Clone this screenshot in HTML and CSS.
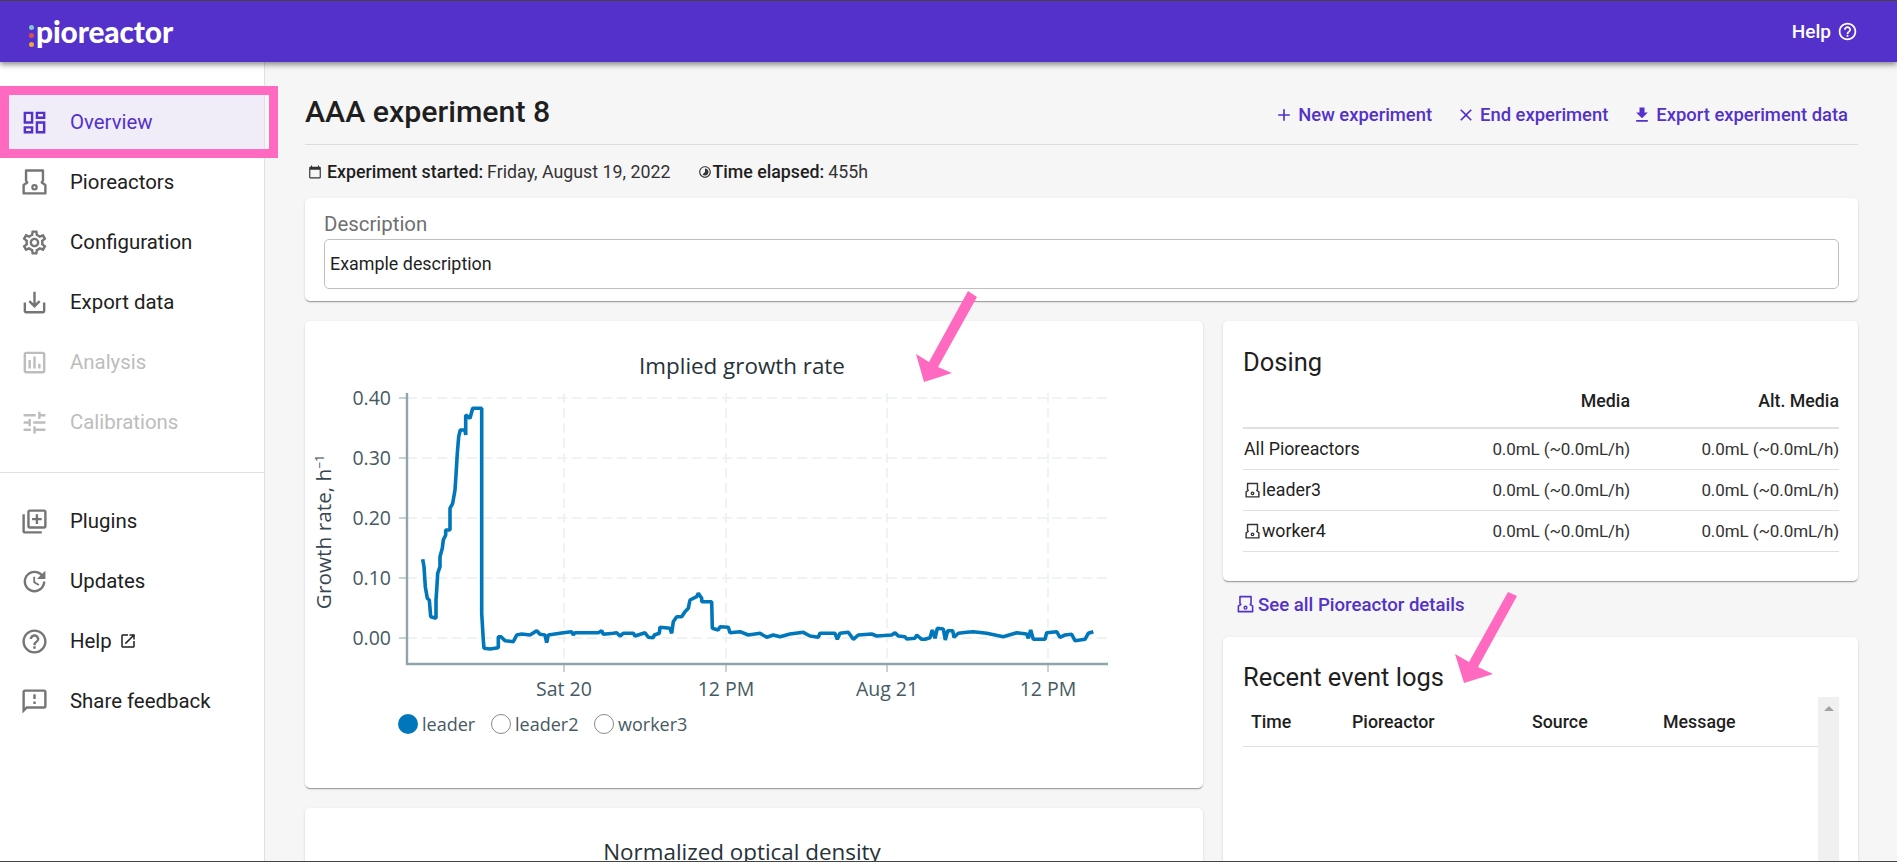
FILE: index.html
```html
<!DOCTYPE html>
<html lang="en">
<head>
<meta charset="utf-8">
<title>Pioreactor - Overview</title>
<link rel="stylesheet" href="styles.css">
</head>
<body>
<svg class="defs" width="0" height="0" aria-hidden="true">
  <symbol id="pio" viewBox="0 0 24 24">
    <path d="M5 2h14v8.5L18 12l3 2v7H3v-7l3-2-1-1.5z" fill="none" stroke="currentColor" stroke-width="2" stroke-linejoin="round"/>
    <circle cx="12" cy="16" r="1.8" fill="none" stroke="currentColor" stroke-width="1.8"/>
  </symbol>
</svg>
<div class="frame">
  <header class="topbar">
    <a class="logo"><span class="logo-dots"><i class="dot dot-a"></i><i class="dot dot-b"></i><i class="dot dot-c"></i></span><span class="logo-text">pioreactor</span></a>
    <a class="top-help">Help
      <svg class="ic-help" viewBox="0 0 24 24"><path d="M11 18h2v-2h-2v2zm1-16C6.48 2 2 6.48 2 12s4.48 10 10 10 10-4.48 10-10S17.52 2 12 2zm0 18c-4.41 0-8-3.59-8-8s3.59-8 8-8 8 3.59 8 8-3.59 8-8 8zm0-14c-2.21 0-4 1.79-4 4h2c0-1.1.9-2 2-2s2 .9 2 2c0 2-3 1.75-3 5h2c0-2.25 3-2.5 3-5 0-2.21-1.79-4-4-4z"/></svg>
    </a>
  </header>
  <div class="shell">
    <nav class="sidebar">
      <ul class="nav-list nav-top">
        <li class="nav-item active"><svg class="nav-ic" viewBox="0 0 24 24"><path d="M19 5v2h-4V5h4M9 5v6H5V5h4m10 8v6h-4v-6h4M9 17v2H5v-2h4M21 3h-8v6h8V3zM11 3H3v10h8V3zm10 8h-8v10h8V11zm-10 4H3v6h8v-6z"/></svg>Overview</li>
        <li class="nav-item"><svg class="nav-ic"><use href="#pio"/></svg>Pioreactors</li>
        <li class="nav-item"><svg class="nav-ic" viewBox="0 0 24 24"><path d="M19.43 12.98c.04-.32.07-.64.07-.98 0-.34-.03-.66-.07-.98l2.11-1.65c.19-.15.24-.42.12-.64l-2-3.46c-.09-.16-.26-.25-.44-.25-.06 0-.12.01-.17.03l-2.49 1c-.52-.4-1.08-.73-1.69-.98l-.38-2.65C14.46 2.18 14.25 2 14 2h-4c-.25 0-.46.18-.49.42l-.38 2.65c-.61.25-1.17.59-1.69.98l-2.49-1c-.06-.02-.12-.03-.18-.03-.17 0-.34.09-.43.25l-2 3.46c-.13.22-.07.49.12.64l2.11 1.65c-.04.32-.07.65-.07.98 0 .33.03.66.07.98l-2.11 1.65c-.19.15-.24.42-.12.64l2 3.46c.09.16.26.25.44.25.06 0 .12-.01.17-.03l2.49-1c.52.4 1.08.73 1.69.98l.38 2.65c.03.24.24.42.49.42h4c.25 0 .46-.18.49-.42l.38-2.65c.61-.25 1.17-.59 1.69-.98l2.49 1c.06.02.12.03.18.03.17 0 .34-.09.43-.25l2-3.46c.12-.22.07-.49-.12-.64l-2.11-1.65zm-1.98-1.71c.04.31.05.52.05.73 0 .21-.02.43-.05.73l-.14 1.13.89.7 1.08.84-.7 1.21-1.27-.51-1.04-.42-.9.68c-.43.32-.84.56-1.25.73l-1.06.43-.16 1.13-.2 1.35h-1.4l-.19-1.35-.16-1.13-1.06-.43c-.43-.18-.83-.41-1.23-.71l-.91-.7-1.06.43-1.27.51-.7-1.21 1.08-.84.89-.7-.14-1.13c-.03-.31-.05-.54-.05-.74s.02-.43.05-.73l.14-1.13-.89-.7-1.08-.84.7-1.21 1.27.51 1.04.42.9-.68c.43-.32.84-.56 1.25-.73l1.06-.43.16-1.13.2-1.35h1.39l.19 1.35.16 1.13 1.06.43c.43.18.83.41 1.23.71l.91.7 1.06-.43 1.27-.51.7 1.21-1.07.85-.89.7.14 1.13zM12 8c-2.21 0-4 1.79-4 4s1.79 4 4 4 4-1.79 4-4-1.79-4-4-4zm0 6c-1.1 0-2-.9-2-2s.9-2 2-2 2 .9 2 2-.9 2-2 2z"/></svg>Configuration</li>
        <li class="nav-item"><svg class="nav-ic" viewBox="0 0 24 24"><path d="M19 12v7H5v-7H3v7c0 1.1.9 2 2 2h14c1.1 0 2-.9 2-2v-7h-2zm-6 .67l2.59-2.58L17 11.5l-5 5-5-5 1.41-1.41L11 12.67V3h2z"/></svg>Export data</li>
        <li class="nav-item disabled"><svg class="nav-ic" viewBox="0 0 24 24"><path d="M9 17H7v-7h2v7zm4 0h-2V7h2v10zm4 0h-2v-4h2v4zm2 2H5V5h14v14zm0-16H5c-1.1 0-2 .9-2 2v14c0 1.1.9 2 2 2h14c1.1 0 2-.9 2-2V5c0-1.1-.9-2-2-2z"/></svg>Analysis</li>
        <li class="nav-item disabled"><svg class="nav-ic" viewBox="0 0 24 24"><path d="M3 17v2h6v-2H3zM3 5v2h10V5H3zm10 16v-2h8v-2h-8v-2h-2v6h2zM7 9v2H3v2h4v2h2V9H7zm14 4v-2H11v2h10zm-6-4h2V7h4V5h-4V3h-2v6z"/></svg>Calibrations</li>
      </ul>
      <ul class="nav-list nav-bottom">
        <li class="nav-item"><svg class="nav-ic" viewBox="0 0 24 24"><path d="M4 6H2v14c0 1.1.9 2 2 2h14v-2H4V6zm16-4H8c-1.1 0-2 .9-2 2v12c0 1.1.9 2 2 2h12c1.1 0 2-.9 2-2V4c0-1.1-.9-2-2-2zm0 14H8V4h12v12zm-7-2h2v-3h3V9h-3V6h-2v3h-3v2h3z"/></svg>Plugins</li>
        <li class="nav-item"><svg class="nav-ic" viewBox="0 0 24 24"><path d="M11 8v5l4.25 2.52.77-1.28-3.52-2.09V8H11zm10 2V3l-2.64 2.64C16.74 4.01 14.49 3 12 3c-4.97 0-9 4.03-9 9s4.03 9 9 9 9-4.03 9-9h-2c0 3.86-3.14 7-7 7s-7-3.14-7-7 3.14-7 7-7c1.93 0 3.68.79 4.95 2.05L14 10h7z"/></svg>Updates</li>
        <li class="nav-item"><svg class="nav-ic" viewBox="0 0 24 24"><path d="M11 18h2v-2h-2v2zm1-16C6.48 2 2 6.48 2 12s4.48 10 10 10 10-4.48 10-10S17.52 2 12 2zm0 18c-4.41 0-8-3.59-8-8s3.59-8 8-8 8 3.59 8 8-3.59 8-8 8zm0-14c-2.21 0-4 1.79-4 4h2c0-1.1.9-2 2-2s2 .9 2 2c0 2-3 1.75-3 5h2c0-2.25 3-2.5 3-5 0-2.21-1.79-4-4-4z"/></svg>Help<svg class="ext-ic" viewBox="0 0 24 24"><path d="M19 19H5V5h7V3H5c-1.11 0-2 .9-2 2v14c0 1.1.89 2 2 2h14c1.1 0 2-.9 2-2v-7h-2v7zM14 3v2h3.59l-9.83 9.83 1.41 1.41L19 6.41V10h2V3h-7z"/></svg></li>
        <li class="nav-item"><svg class="nav-ic" viewBox="0 0 24 24"><path d="M20 2H4c-1.1 0-1.99.9-1.99 2L2 22l4-4h14c1.1 0 2-.9 2-2V4c0-1.1-.9-2-2-2zm0 14H5.17L4 17.17V4h16v12zm-9-4h2v2h-2zm0-6h2v4h-2z"/></svg>Share feedback</li>
      </ul>
    </nav>
    <main class="content">
      <div class="page-head">
        <h1 class="page-title">AAA experiment 8</h1>
        <div class="actions">
          <a class="action"><svg class="action-ic" viewBox="0 0 24 24"><path d="M19 13h-6v6h-2v-6H5v-2h6V5h2v6h6v2z"/></svg>New experiment</a>
          <a class="action"><svg class="action-ic" viewBox="0 0 24 24"><path d="M19 6.41L17.59 5 12 10.59 6.41 5 5 6.41 10.59 12 5 17.59 6.41 19 12 13.41 17.59 19 19 17.59 13.41 12 19 6.41z"/></svg>End experiment</a>
          <a class="action"><svg class="action-ic" viewBox="0 0 24 24"><path d="M19 9h-4V3H9v6H5l7 7 7-7zM5 18v2h14v-2H5z"/></svg>Export experiment data</a>
        </div>
      </div>
      <div class="meta">
        <span class="meta-item"><svg class="meta-ic" viewBox="0 0 24 24"><path d="M20 3h-1V1h-2v2H7V1H5v2H4c-1.1 0-2 .9-2 2v16c0 1.1.9 2 2 2h16c1.1 0 2-.9 2-2V5c0-1.1-.9-2-2-2zm0 18H4V8h16v13z"/></svg><b>Experiment started:</b><span class="meta-val">Friday, August 19, 2022</span></span>
        <span class="meta-item meta-time"><svg class="meta-ic" viewBox="0 0 24 24"><path d="M16.24 7.76C15.07 6.59 13.54 6 12 6v6l-4.24 4.24c2.34 2.34 6.14 2.34 8.49 0 2.34-2.34 2.34-6.14-.01-8.48zM12 2C6.48 2 2 6.48 2 12s4.48 10 10 10 10-4.48 10-10S17.52 2 12 2zm0 18c-4.42 0-8-3.58-8-8s3.58-8 8-8 8 3.58 8 8-3.58 8-8 8z"/></svg><b>Time elapsed:</b><span class="meta-val">455h</span></span>
      </div>
      <section class="card desc-card">
        <div class="desc-label">Description</div>
        <div class="desc-input">Example description</div>
      </section>
      <div class="columns">
        <div class="col">
          <section class="card chart-card">
            <svg class="chart" viewBox="305 321 898 467">
              <text class="chart-title" x="742" y="374" text-anchor="middle">Implied growth rate</text>
              <g class="grid">
                <line x1="407" x2="1108" y1="398" y2="398"/><line x1="407" x2="1108" y1="458" y2="458"/><line x1="407" x2="1108" y1="518" y2="518"/><line x1="407" x2="1108" y1="578" y2="578"/><line x1="407" x2="1108" y1="638" y2="638"/>
                <line x1="564" x2="564" y1="393" y2="664"/><line x1="726" x2="726" y1="393" y2="664"/><line x1="887" x2="887" y1="393" y2="664"/><line x1="1048" x2="1048" y1="393" y2="664"/>
              </g>
              <g class="ticks">
                <line x1="399" x2="407" y1="398" y2="398"/><line x1="399" x2="407" y1="458" y2="458"/><line x1="399" x2="407" y1="518" y2="518"/><line x1="399" x2="407" y1="578" y2="578"/><line x1="399" x2="407" y1="638" y2="638"/>
                <line x1="564" x2="564" y1="664" y2="672"/><line x1="726" x2="726" y1="664" y2="672"/><line x1="887" x2="887" y1="664" y2="672"/><line x1="1048" x2="1048" y1="664" y2="672"/>
              </g>
              <path class="axis" d="M407 393V664H1108"/>
              <g class="tick-labels" text-anchor="end">
                <text x="391" y="405">0.40</text><text x="391" y="465">0.30</text><text x="391" y="525">0.20</text><text x="391" y="585">0.10</text><text x="391" y="645">0.00</text>
              </g>
              <g class="tick-labels" text-anchor="middle">
                <text x="564" y="696">Sat 20</text><text x="726" y="696">12 PM</text><text x="887" y="696">Aug 21</text><text x="1048" y="696">12 PM</text>
              </g>
              <text class="y-title" transform="translate(331 532) rotate(-90)" text-anchor="middle">Growth rate, h<tspan class="sup" dy="-7">−1</tspan></text>
              <polyline class="series" points="422.7,559.3 424,566.7 425.3,586.7 427.3,598.3 429.3,600 430.7,616.7 436,618.3 436,600 436.7,590 437.7,573.3 440,566.7 440,556.7 442.3,548.3 443.3,540 445.7,535 445.7,530 450,530 450,508.3 452.7,503.3 455,490 456,475 457.3,453.3 458.7,436.7 460.3,430 465,430 465.7,435 465.7,415 470,418.3 472.7,408.3 481.7,408.3 481.7,600 481.7,613.3 483.3,640 484,648.3 490,649 498.3,647.7 498.3,636.7 501,636.7 505,640.7 513.3,641.7 516.7,635 521.7,634 530,635 536.7,630.7 540,634.3 545,635 546.7,642.7 548.3,635 563.3,632.7 571.7,631.7 573.3,635 575,632.7 598.3,632.7 601.7,630.7 603.3,634.3 613.3,633.3 616.7,632.7 620,636 623.3,633.3 633.3,633.3 635,636 645,632.7 648.3,637.3 653.3,637.7 654.3,635 659.3,633.3 660,627.3 670,628.3 671.7,633.3 673.3,621.7 676.7,616.7 681.7,616.7 685,611.7 688.3,608.3 690,600 696.7,596.7 698.3,593.3 701.7,598.3 701.7,601.7 711.7,601.7 712.3,628.3 718.3,630 720,626.7 728.3,627.3 730,632.7 740,631.7 748.3,635 760,633.3 766.7,637.3 773.3,635 780,636.7 790,634 803.3,632.3 810,636 818.3,637.3 820,633.3 835,633.3 837.3,639.3 840,633.3 848.3,632.3 853.3,639.3 858.3,635 871.7,634 876.7,636 891.7,635 895,632.7 898.3,636 905,636.7 906.7,639 915,638.3 916.7,635 921.7,639.3 925,639.3 930,637.7 932.3,630 935,638.3 937.3,628.3 943.3,629 945.3,640 947.7,630.7 952.7,630.7 954,637.3 958.3,633.3 966.7,632.3 973.3,631.7 986.7,633.3 1003.3,636.7 1016.7,632.7 1026.7,634 1028.3,638.3 1030.7,630 1033.3,639.3 1045,639.3 1046.7,632.7 1056.7,631.7 1060,637.3 1065,635 1071.7,634.3 1075,640.7 1085,639.3 1088.3,633.3 1093.3,631.7"/>
              <circle class="leg-on" cx="408" cy="724" r="10"/><text class="legend" x="422" y="731">leader</text>
              <circle class="leg-off" cx="501" cy="724" r="9.5"/><text class="legend" x="515" y="731">leader2</text>
              <circle class="leg-off" cx="604" cy="724" r="9.5"/><text class="legend" x="618" y="731">worker3</text>
            </svg>
          </section>
          <section class="card chart-card next-card">
            <div class="next-title">Normalized optical density</div>
          </section>
        </div>
        <div class="col">
          <section class="card dosing">
            <h2 class="card-title">Dosing</h2>
            <table class="dose-table">
              <thead><tr><th class="c-name"></th><th class="c-num">Media</th><th class="c-alt">Alt. Media</th></tr></thead>
              <tbody>
                <tr><td>All Pioreactors</td><td class="num">0.0mL (~0.0mL/h)</td><td class="num">0.0mL (~0.0mL/h)</td></tr>
                <tr><td><svg class="unit-ic"><use href="#pio"/></svg>leader3</td><td class="num">0.0mL (~0.0mL/h)</td><td class="num">0.0mL (~0.0mL/h)</td></tr>
                <tr><td><svg class="unit-ic"><use href="#pio"/></svg>worker4</td><td class="num">0.0mL (~0.0mL/h)</td><td class="num">0.0mL (~0.0mL/h)</td></tr>
              </tbody>
            </table>
          </section>
          <a class="details-link"><svg class="unit-ic link-ic"><use href="#pio"/></svg>See all Pioreactor details</a>
          <section class="card logs">
            <h2 class="card-title">Recent event logs</h2>
            <div class="log-wrap">
              <div class="log-table">
                <div class="log-head"><span>Time</span><span>Pioreactor</span><span>Source</span><span>Message</span></div>
              </div>
              <div class="scroll-track"><i class="scroll-up"></i></div>
            </div>
          </section>
        </div>
      </div>
    </main>
  </div>
</div>
<div class="mark-box"></div>
<svg class="mark-arrows" viewBox="0 0 1897 862">
  <polygon points="968,291 977,297 938,367 952,373 924,382 916,354 929,362"/>
  <polygon points="1508,592 1517,596 1478,667 1493,674 1464,683 1455,654 1469,662"/>
</svg>
</body>
</html>
```
FILE: styles.css
```css
* { box-sizing: border-box; }
html, body { margin: 0; height: 100%; overflow: hidden; }
body { font-family: Roboto, "Noto Sans", sans-serif; color: #1f1f1f; background: #f6f6f6; position: relative; }
.defs { position: absolute; }
.frame { height: 862px; border-top: 1px solid #444; border-bottom: 1px solid #444; display: flex; flex-direction: column; overflow: hidden; }

.topbar { height: 61px; flex: none; background: #5331ca; color: #fff; display: flex; align-items: center; justify-content: space-between; padding: 0 39px 0 29px; box-shadow: 0 2px 5px rgba(0,0,0,.35), 0 4px 6px rgba(0,0,0,.14); position: relative; z-index: 2; }
.logo { display: flex; align-items: center; gap: 2px; }
.logo-dots { display: flex; flex-direction: column; gap: 3.5px; margin-top: 8px; }
.dot { display: block; width: 5px; height: 5px; border-radius: 50%; }
.dot-a { background: #7fc8c9; }
.dot-b { background: #d9534f; }
.dot-c { background: #f0a63a; }
.logo-text { font-family: Lato, sans-serif; font-weight: 900; font-size: 29.8px; line-height: 36px; letter-spacing: -.1px; }
.top-help { display: flex; align-items: center; gap: 6px; font-size: 19px; font-weight: 500; }
.ic-help { width: 21px; height: 21px; fill: #fff; }

.shell { flex: 1; display: flex; min-height: 0; }
.sidebar { width: 265px; flex: none; background: #fff; border-right: 1px solid #e0e0e0; }
.nav-list { list-style: none; margin: 0; padding-left: 0; }
.nav-top { padding: 30px 0 20px; border-bottom: 1px solid #e0e0e0; }
.nav-bottom { padding: 18px 0 0; }
.nav-item { height: 60px; display: flex; align-items: center; padding-left: 20px; font-size: 20.4px; color: #212121; }
.nav-ic { width: 29px; height: 29px; margin-right: 21px; flex: none; fill: #757575; color: #757575; }
.ext-ic { width: 18px; height: 18px; margin-left: 7px; fill: #212121; }
.nav-item.active { background: #f0edf9; color: #5331ca; }
.nav-item.active .nav-ic { fill: #5331ca; }
.nav-item.disabled { color: #bdbdbd; }
.nav-item.disabled .nav-ic { fill: #bdbdbd; }

.content { flex: 1; min-width: 0; padding: 0 39px 0 40px; }
.page-head { display: flex; justify-content: space-between; align-items: center; padding: 30px 0 12px; border-bottom: 1px solid #dcdcdc; }
.page-title { margin: 0; font-size: 30.3px; line-height: 40px; font-weight: 500; color: #1f1f1f; }
.actions { display: flex; gap: 24px; margin-top: 5px; padding-right: 10px; }
.action { display: flex; align-items: center; gap: 4px; font-size: 18.4px; font-weight: 500; color: #5331ca; }
.action-ic { width: 20px; height: 20px; fill: #5331ca; }
.meta { height: 53px; display: flex; align-items: center; font-size: 17.8px; padding-left: 3px; }
.meta-item { display: flex; align-items: center; color: #333; }
.meta-item b { font-weight: 500; color: #1f1f1f; }
.meta-val { margin-left: 4px; }
.meta-time { margin-left: 28px; }
.meta-ic { width: 14px; height: 14px; fill: #333; flex: none; margin-right: 5px; }
.meta-time .meta-ic { margin-right: 0; }

.card { background: #fff; border-radius: 5px; box-shadow: 0 2px 1px -1px rgba(0,0,0,.2), 0 1px 1px rgba(0,0,0,.14), 0 1px 3px rgba(0,0,0,.12); }
.desc-card { height: 103px; padding: 13px 19px 12px; }
.desc-label { height: 28px; line-height: 26px; font-size: 20.4px; color: #6f6f6f; }
.desc-input { height: 50px; border: 1px solid #bfbfbf; border-radius: 5px; padding: 0 5px; line-height: 48px; font-size: 17.9px; color: #1f1f1f; }

.columns { display: grid; grid-template-columns: 898px 1fr; gap: 20px; margin-top: 20px; }
.col { display: flex; flex-direction: column; min-width: 0; }
.chart-card { height: 467px; }
.next-card { margin-top: 20px; }
.chart { display: block; width: 898px; height: 467px; font-family: "Open Sans", "Noto Sans", sans-serif; }
.chart-title { font-size: 22.4px; fill: #263238; }
.grid line { stroke: #eceff1; stroke-width: 1.5; stroke-dasharray: 10 5; }
.ticks line { stroke: #90a4ae; stroke-width: 1; }
.axis { fill: none; stroke: #90a4ae; stroke-width: 2.4; }
.tick-labels text { font-size: 19.5px; fill: #455a64; }
.y-title { font-size: 20.8px; fill: #37474f; }
.sup { font-size: 12px; }
.series { fill: none; stroke: #0077bb; stroke-width: 3.6; stroke-linejoin: bevel; }
.leg-on { fill: #0077bb; }
.leg-off { fill: #fff; stroke: #8a8a8a; stroke-width: 1; }
.legend { font-size: 18px; fill: #455a64; }
.next-title { padding: 30px 24px 0 0; text-align: center; font-family: "Open Sans", "Noto Sans", sans-serif; font-size: 22.4px; line-height: 28px; color: #263238; }

.card-title { margin: 0; font-size: 25.5px; line-height: 32px; font-weight: 400; color: #1f1f1f; }
.dosing { height: 260px; padding: 25px 19px 0 20px; }
.dose-table { width: 100%; border-collapse: collapse; font-size: 17.8px; table-layout: fixed; }
.dose-table th { height: 50px; padding: 0 0 5px; text-align: right; font-weight: 500; border-bottom: 2px solid #e0e0e0; color: #1f1f1f; }
.c-num { width: 208px; }
.c-alt { width: 209px; }
.dose-table td { height: 41px; padding: 0 0 0 1px; border-bottom: 1px solid #e0e0e0; color: #1f1f1f; }
.dose-table td.num { text-align: right; padding: 0; color: #333; font-size: 17px; letter-spacing: -.1px; }
.unit-ic { width: 17px; height: 17px; margin-right: 1px; vertical-align: -3px; color: #333; }
.details-link { height: 56px; display: flex; align-items: center; padding: 0 0 9px 13px; font-size: 18.6px; font-weight: 500; color: #5331ca; }
.link-ic { width: 19px; height: 19px; color: #5331ca; margin-right: 3px; }
.logs { height: 300px; padding: 24px 19px 0 20px; }
.log-wrap { display: flex; margin-top: 4px; height: 240px; }
.log-table { flex: 1; min-width: 0; }
.log-head { height: 50px; display: grid; grid-template-columns: 101px 180px 131px 1fr; align-items: center; padding-left: 8px; border-bottom: 1px solid #e0e0e0; font-size: 17.8px; font-weight: 500; color: #1f1f1f; }
.scroll-track { width: 21px; background: #f0f0f0; flex: none; display: flex; justify-content: center; padding-top: 9px; }
.scroll-up { display: block; width: 0; height: 0; border-left: 5px solid transparent; border-right: 5px solid transparent; border-bottom: 5px solid #a3a3a3; }

.mark-box { position: absolute; left: 0; top: 86px; width: 278px; height: 72px; border: 9px solid #ff69c0; }
.mark-arrows { position: absolute; left: 0; top: 0; width: 1897px; height: 862px; pointer-events: none; }
.mark-arrows polygon { fill: #ff69c0; }
```
